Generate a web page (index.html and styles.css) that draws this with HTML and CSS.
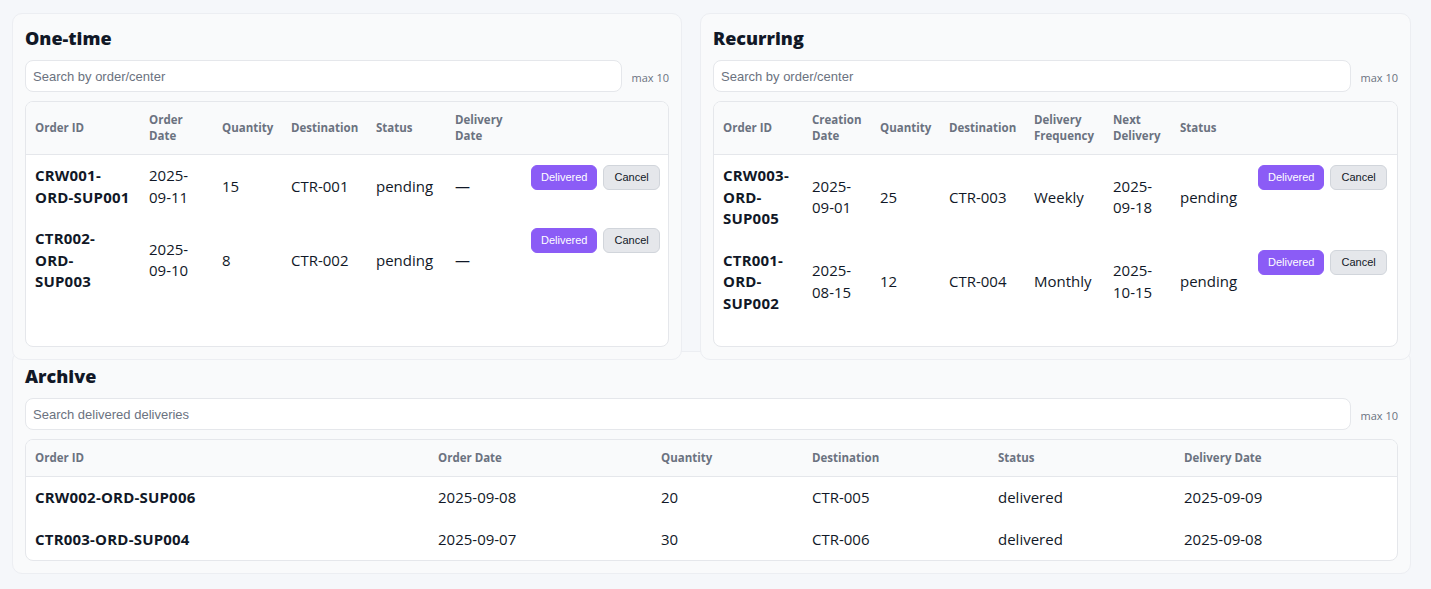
FILE: index.html
```html
<!DOCTYPE html>
<html lang="en">
<head>
<meta charset="utf-8">
<title>Deliveries</title>
<link rel="stylesheet" href="styles.css">
</head>
<body>
<main class="page">
  <div class="top-grid">
    <section class="panel panel-top">
      <h2 class="panel-title">One-time</h2>
      <div class="search-row">
        <input class="search" type="text" placeholder="Search by order/center">
        <span class="max">max 10</span>
      </div>
      <div class="card">
        <table class="tbl">
          <thead>
            <tr>
              <th class="w114">Order ID</th>
              <th class="w73">Order Date</th>
              <th class="w69">Quantity</th>
              <th class="w85">Destination</th>
              <th class="w79">Status</th>
              <th class="w76">Delivery Date</th>
              <th></th>
            </tr>
          </thead>
          <tbody>
            <tr>
              <td class="id">CRW001-<br>ORD-SUP001</td>
              <td>2025-09-11</td>
              <td>15</td>
              <td>CTR-001</td>
              <td>pending</td>
              <td>—</td>
              <td class="actions"><div class="btns"><button class="btn btn-primary">Delivered</button><button class="btn btn-secondary">Cancel</button></div></td>
            </tr>
            <tr>
              <td class="id">CTR002-<br>ORD-<br>SUP003</td>
              <td>2025-09-10</td>
              <td>8</td>
              <td>CTR-002</td>
              <td>pending</td>
              <td>—</td>
              <td class="actions"><div class="btns"><button class="btn btn-primary">Delivered</button><button class="btn btn-secondary">Cancel</button></div></td>
            </tr>
          </tbody>
        </table>
      </div>
    </section>

    <section class="panel panel-top">
      <h2 class="panel-title">Recurring</h2>
      <div class="search-row">
        <input class="search" type="text" placeholder="Search by order/center">
        <span class="max">max 10</span>
      </div>
      <div class="card">
        <table class="tbl">
          <thead>
            <tr>
              <th class="w89">Order ID</th>
              <th class="w68">Creation Date</th>
              <th class="w69">Quantity</th>
              <th class="w85">Destination</th>
              <th class="w79">Delivery Frequency</th>
              <th class="w67">Next Delivery</th>
              <th class="w78">Status</th>
              <th></th>
            </tr>
          </thead>
          <tbody>
            <tr>
              <td class="id">CRW003-<br>ORD-<br>SUP005</td>
              <td>2025-09-01</td>
              <td>25</td>
              <td>CTR-003</td>
              <td>Weekly</td>
              <td>2025-09-18</td>
              <td>pending</td>
              <td class="actions"><div class="btns"><button class="btn btn-primary">Delivered</button><button class="btn btn-secondary">Cancel</button></div></td>
            </tr>
            <tr>
              <td class="id">CTR001-<br>ORD-<br>SUP002</td>
              <td>2025-08-15</td>
              <td>12</td>
              <td>CTR-004</td>
              <td>Monthly</td>
              <td>2025-10-15</td>
              <td>pending</td>
              <td class="actions"><div class="btns"><button class="btn btn-primary">Delivered</button><button class="btn btn-secondary">Cancel</button></div></td>
            </tr>
          </tbody>
        </table>
      </div>
    </section>
  </div>

  <section class="panel panel-archive">
    <h2 class="panel-title">Archive</h2>
    <div class="search-row">
      <input class="search" type="text" placeholder="Search delivered deliveries">
      <span class="max">max 10</span>
    </div>
    <div class="card">
      <table class="tbl">
        <thead>
          <tr>
            <th class="w403">Order ID</th>
            <th class="w223">Order Date</th>
            <th class="w151">Quantity</th>
            <th class="w186">Destination</th>
            <th class="w186">Status</th>
            <th>Delivery Date</th>
          </tr>
        </thead>
        <tbody>
          <tr>
            <td class="id">CRW002-ORD-SUP006</td>
            <td>2025-09-08</td>
            <td>20</td>
            <td>CTR-005</td>
            <td>delivered</td>
            <td>2025-09-09</td>
          </tr>
          <tr>
            <td class="id">CTR003-ORD-SUP004</td>
            <td>2025-09-07</td>
            <td>30</td>
            <td>CTR-006</td>
            <td>delivered</td>
            <td>2025-09-08</td>
          </tr>
        </tbody>
      </table>
    </div>
  </section>
</main>
</body>
</html>
```

FILE: styles.css
```css
* { box-sizing: border-box; }

html, body {
  margin: 0;
  background: #f5f7fa;
  font-family: "Open Sans", "Noto Sans", Arial, sans-serif;
  color: #111827;
}

.page {
  padding: 13px 20px 17px 12px;
}

.top-grid {
  display: grid;
  grid-template-columns: 670px 1fr;
  gap: 18px;
  margin-bottom: -9px;
}

.panel {
  background: #f9fafb;
  border: 1px solid #eceef2;
  border-radius: 10px;
  padding: 12px;
  display: flex;
  flex-direction: column;
}

.panel-top {
  position: relative;
  min-height: 347px;
}

.panel-title {
  margin: 0 0 10px;
  font-size: 18px;
  line-height: 24px;
  font-weight: 800;
  color: #111827;
}

.search-row {
  display: flex;
  align-items: center;
  gap: 10px;
  margin-bottom: 9px;
}

.search {
  flex: 1;
  height: 32px;
  border: 1px solid #e5e7eb;
  border-radius: 8px;
  background: #ffffff;
  padding: 0 7px;
  font-family: "Liberation Sans", Arial, sans-serif;
  font-size: 13px;
  color: #111827;
  outline: none;
}

.search::placeholder {
  color: #6b7280;
}

.max {
  font-size: 11px;
  color: #6b7280;
  margin-top: 3px;
  white-space: nowrap;
}

.card {
  flex: 1;
  background: #ffffff;
  border: 1px solid #e5e7eb;
  border-radius: 8px;
  overflow: hidden;
}

.tbl {
  width: 100%;
  border-collapse: collapse;
  table-layout: fixed;
}

.tbl thead tr {
  background: #f9fafb;
  border-bottom: 1px solid #e5e7eb;
}

.tbl th {
  text-align: left;
  font-size: 11.5px;
  line-height: 16px;
  font-weight: 700;
  color: #6b7280;
  padding: 10px 9px;
  vertical-align: middle;
}

.tbl td {
  font-size: 15px;
  line-height: 21.5px;
  padding: 10px 9px;
  vertical-align: middle;
  color: #111827;
}

.tbl td.id {
  font-weight: 700;
  white-space: nowrap;
  letter-spacing: 0.2px;
}

.tbl td.actions {
  vertical-align: top;
}

.btns {
  display: flex;
  gap: 6px;
}

.btn {
  font-family: "Liberation Sans", Arial, sans-serif;
  font-size: 11px;
  line-height: 13px;
  font-weight: 500;
  padding: 5px 10px;
  border-radius: 6px;
  border: 1px solid transparent;
  cursor: pointer;
  white-space: nowrap;
}

.btn-primary {
  background: #8b5cf6;
  border-color: #8b5cf6;
  color: #ffffff;
  padding: 5px 9px;
}

.btn-secondary {
  background: #e5e7eb;
  border-color: #d1d5db;
  color: #111827;
}

.w114 { width: 114px; }
.w73 { width: 73px; }
.w69 { width: 69px; }
.w85 { width: 85px; }
.w79 { width: 79px; }
.w76 { width: 76px; }
.w89 { width: 89px; }
.w68 { width: 68px; }
.w67 { width: 67px; }
.w78 { width: 78px; }
.w403 { width: 403px; }
.w223 { width: 223px; }
.w151 { width: 151px; }
.w186 { width: 186px; }
```
